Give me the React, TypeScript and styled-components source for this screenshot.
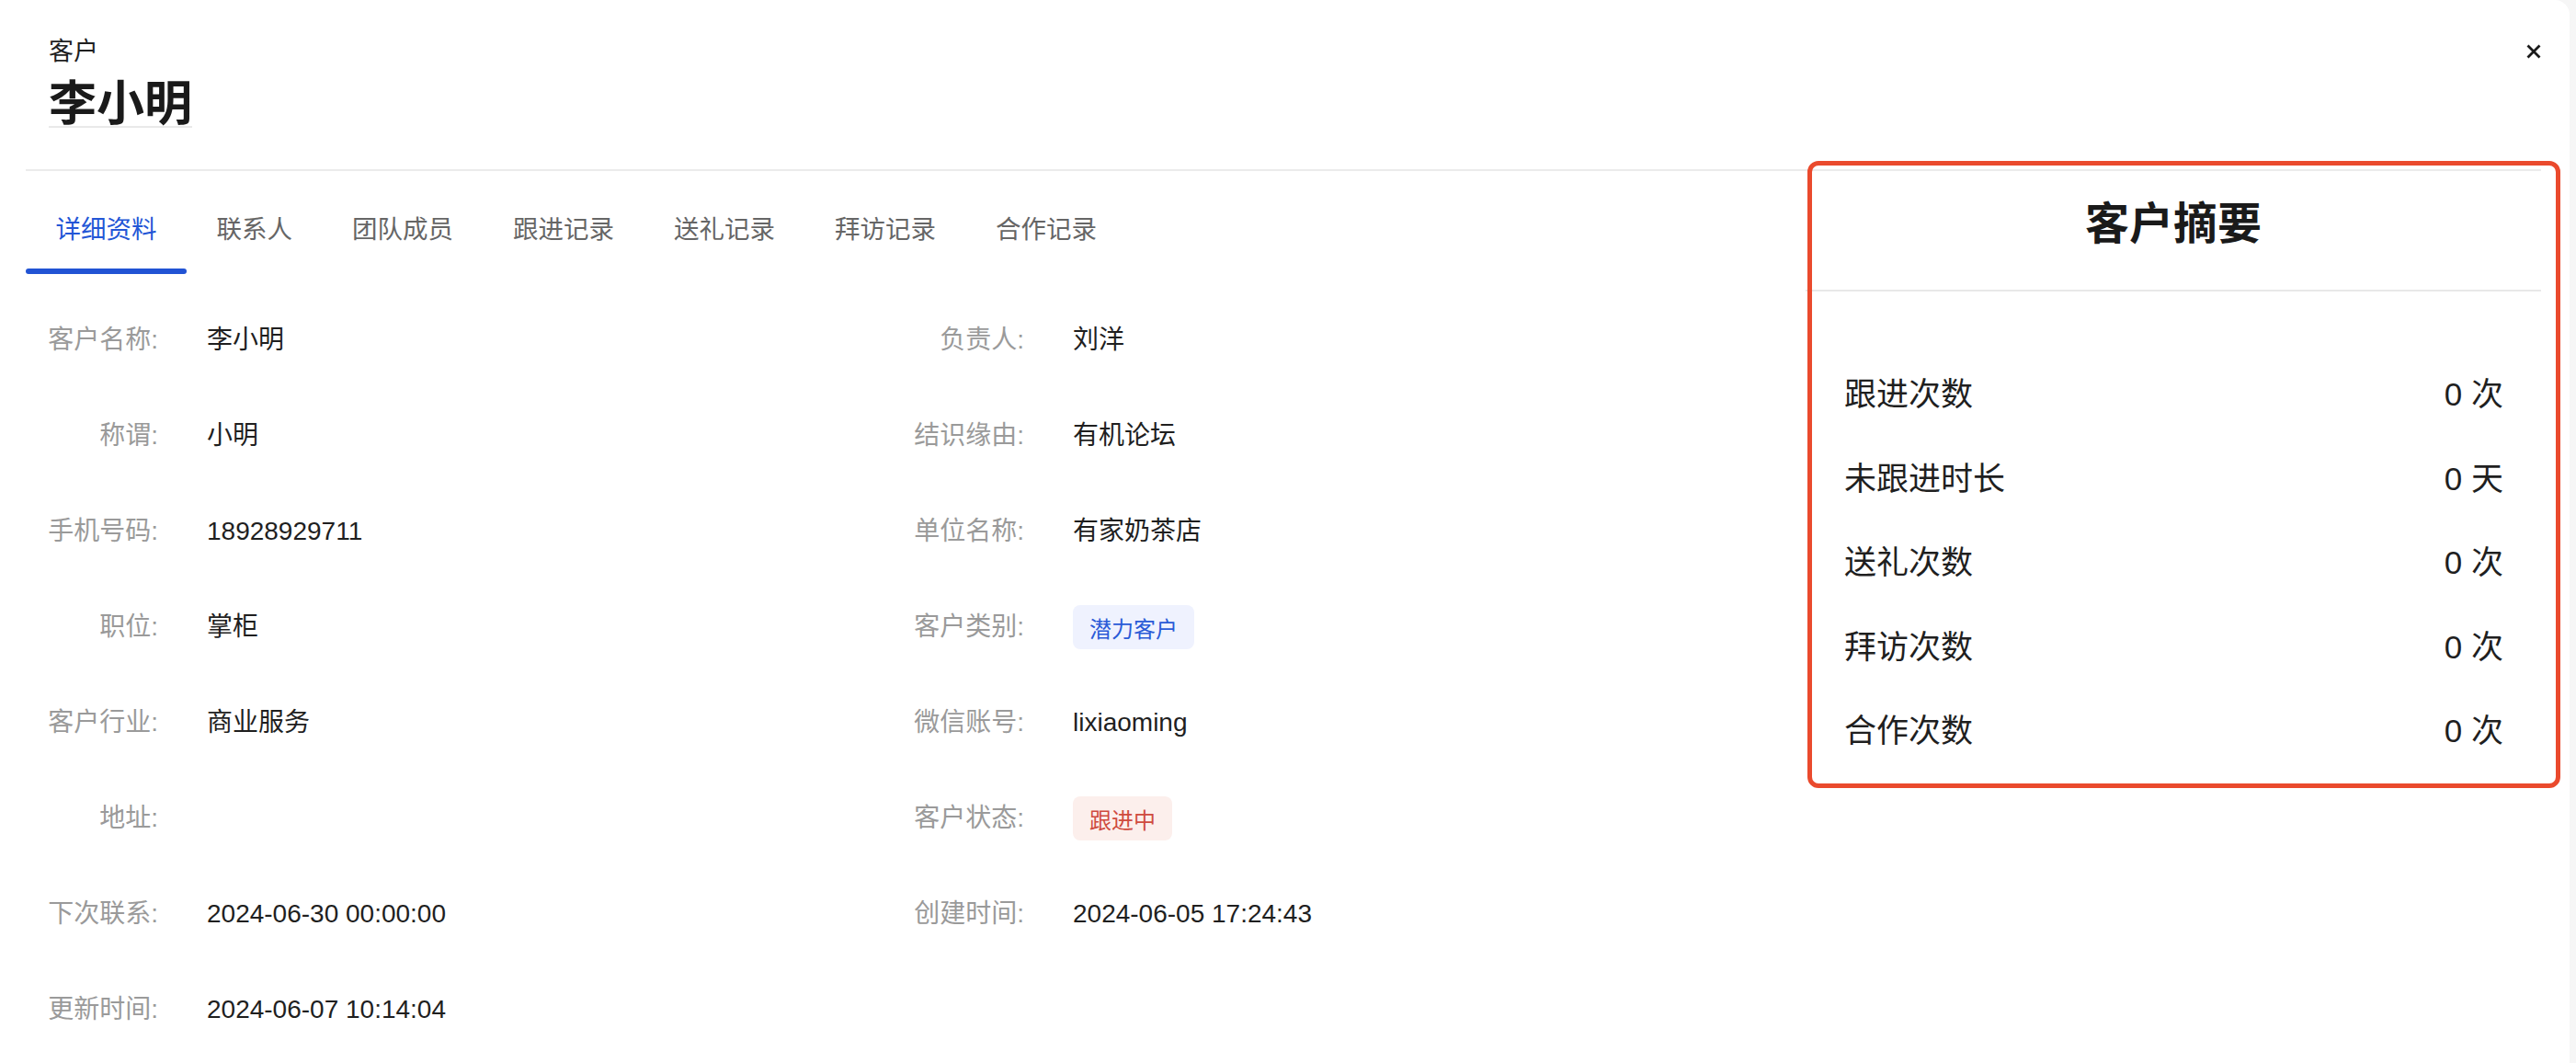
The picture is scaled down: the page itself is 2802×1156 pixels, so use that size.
import React from "react";
import styled, { createGlobalStyle } from "styled-components";

const GlobalStyle = createGlobalStyle`
  html, body {
    margin: 0;
    padding: 0;
    background: #f6f6f6;
  }
  body {
    font-family: "Liberation Sans", "Noto Sans CJK SC", sans-serif;
    -webkit-font-smoothing: antialiased;
  }
  * { box-sizing: border-box; }
`;

const Card = styled.div`
  background: #ffffff;
  margin-right: 7px;
  border-top-right-radius: 16px;
  min-height: 100vh;
  padding: 0 31px 0 28px;
`;

const Header = styled.header`
  display: flex;
  justify-content: space-between;
  align-items: flex-start;
  padding: 36px 0 45px;
  border-bottom: 2px solid #ebebeb;
`;

const HeaderText = styled.div`
  display: flex;
  flex-direction: column;
  align-items: flex-start;
  padding-left: 25px;
`;

const Kicker = styled.div`
  font-size: 27px;
  line-height: 40px;
  color: #1f1f1f;
`;

const Title = styled.h1`
  margin: 13px 0 0;
  font-size: 52px;
  line-height: 48px;
  font-weight: 700;
  color: #1a1a1a;
  border-bottom: 2px solid #e9e9e9;
`;

const CloseButton = styled.button`
  width: 16px;
  height: 40px;
  padding: 0;
  border: none;
  background: transparent;
  display: flex;
  align-items: center;
  justify-content: center;
  cursor: pointer;
  color: #1a1a1a;
`;

const Body = styled.div`
  display: flex;
  align-items: flex-start;
`;

const Main = styled.div`
  flex: 1;
  min-width: 0;
`;

const Tabs = styled.nav`
  display: flex;
`;

const Tab = styled.div<{ $active?: boolean }>`
  position: relative;
  padding: 44px 32.5px 28px;
  font-size: 27.5px;
  line-height: 40px;
  color: ${(p) => (p.$active ? "#2356d6" : "#666666")};
  cursor: pointer;

  &::after {
    content: "";
    position: absolute;
    left: 0;
    right: 0;
    bottom: 0;
    height: 6px;
    border-radius: 3px;
    background: ${(p) => (p.$active ? "#2153d4" : "transparent")};
  }
`;

const DetailGrid = styled.div`
  display: grid;
  grid-template-columns: 942px 942px;
  grid-auto-rows: 104px;
  margin-top: 20px;
`;

const Field = styled.div`
  display: flex;
  align-items: center;
`;

const Label = styled.span`
  width: 144px;
  flex-shrink: 0;
  margin-right: 53px;
  text-align: right;
  font-size: 28px;
  line-height: 40px;
  color: #9a9a9a;
`;

const Value = styled.span`
  font-size: 28px;
  line-height: 40px;
  color: #1f1f1f;
`;

const Tag = styled.span<{ $tone: "blue" | "red" }>`
  display: inline-flex;
  align-items: center;
  height: 48px;
  padding: 0 18px;
  border-radius: 8px;
  font-size: 24px;
  background: ${(p) => (p.$tone === "blue" ? "#eff2fe" : "#fcefec")};
  color: ${(p) => (p.$tone === "blue" ? "#2a5bd7" : "#cf4b3e")};
`;

const Summary = styled.aside`
  position: relative;
  width: 800px;
  flex-shrink: 0;
`;

const SummaryTitle = styled.h2`
  margin: 0;
  padding: 38px 0 51px;
  text-align: center;
  font-size: 48px;
  line-height: 40px;
  font-weight: 700;
  color: #1a1a1a;
  border-bottom: 2px solid #e8e8e8;
`;

const StatList = styled.div`
  padding-top: 63px;
`;

const StatRow = styled.div`
  display: flex;
  justify-content: space-between;
  align-items: center;
  height: 91.5px;
  padding: 0 41px 0 42px;
  font-size: 35px;
  color: #1f1f1f;
`;

const Highlight = styled.div`
  position: absolute;
  top: -11px;
  left: 2px;
  right: -21px;
  bottom: -19px;
  border: 5px solid #ea4a2d;
  border-radius: 12px;
  pointer-events: none;
`;

const CloseIcon = () => (
  <svg width="16" height="16" viewBox="0 0 16 16" aria-hidden="true">
    <path d="M1.5 1.5 L14.5 14.5 M14.5 1.5 L1.5 14.5" stroke="currentColor" strokeWidth="2.8" strokeLinecap="butt" fill="none" />
  </svg>
);

type FieldItem = { label: string; value?: React.ReactNode };

const tabs = ["详细资料", "联系人", "团队成员", "跟进记录", "送礼记录", "拜访记录", "合作记录"];

const fields: FieldItem[] = [
  { label: "客户名称:", value: "李小明" },
  { label: "负责人:", value: "刘洋" },
  { label: "称谓:", value: "小明" },
  { label: "结识缘由:", value: "有机论坛" },
  { label: "手机号码:", value: "18928929711" },
  { label: "单位名称:", value: "有家奶茶店" },
  { label: "职位:", value: "掌柜" },
  { label: "客户类别:", value: <Tag $tone="blue">潜力客户</Tag> },
  { label: "客户行业:", value: "商业服务" },
  { label: "微信账号:", value: "lixiaoming" },
  { label: "地址:", value: "" },
  { label: "客户状态:", value: <Tag $tone="red">跟进中</Tag> },
  { label: "下次联系:", value: "2024-06-30 00:00:00" },
  { label: "创建时间:", value: "2024-06-05 17:24:43" },
  { label: "更新时间:", value: "2024-06-07 10:14:04" },
];

const stats = [
  { label: "跟进次数", value: "0 次" },
  { label: "未跟进时长", value: "0 天" },
  { label: "送礼次数", value: "0 次" },
  { label: "拜访次数", value: "0 次" },
  { label: "合作次数", value: "0 次" },
];

export default function App() {
  return (
    <>
      <GlobalStyle />
      <Card>
        <Header>
          <HeaderText>
            <Kicker>客户</Kicker>
            <Title>李小明</Title>
          </HeaderText>
          <CloseButton aria-label="关闭">
            <CloseIcon />
          </CloseButton>
        </Header>
        <Body>
          <Main>
            <Tabs>
              {tabs.map((t, i) => (
                <Tab key={t} $active={i === 0}>
                  {t}
                </Tab>
              ))}
            </Tabs>
            <DetailGrid>
              {fields.map((f) => (
                <Field key={f.label}>
                  <Label>{f.label}</Label>
                  {typeof f.value === "string" ? <Value>{f.value}</Value> : f.value}
                </Field>
              ))}
            </DetailGrid>
          </Main>
          <Summary>
            <SummaryTitle>客户摘要</SummaryTitle>
            <StatList>
              {stats.map((s) => (
                <StatRow key={s.label}>
                  <span>{s.label}</span>
                  <span>{s.value}</span>
                </StatRow>
              ))}
            </StatList>
            <Highlight />
          </Summary>
        </Body>
      </Card>
    </>
  );
}
